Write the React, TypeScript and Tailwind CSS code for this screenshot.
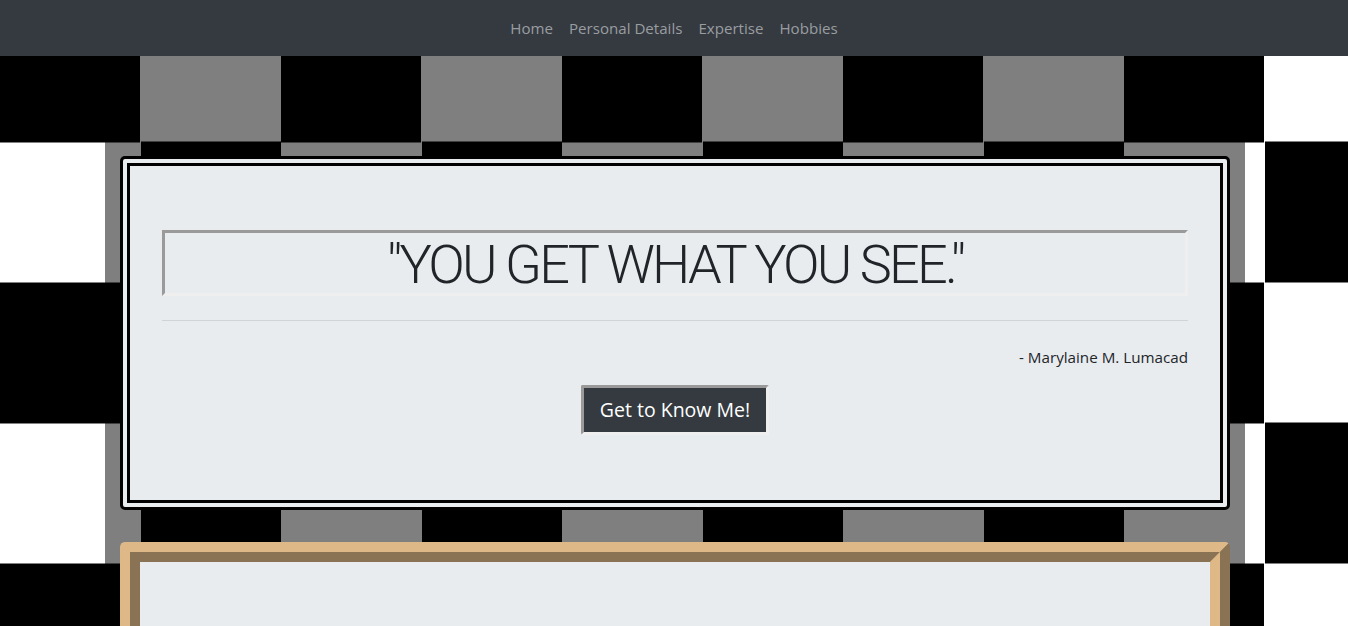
import React from "react";

export default function App() {
  const links = ["Home", "Personal Details", "Expertise", "Hobbies"];
  return (
    <div
      className="min-h-screen w-full overflow-hidden [background-image:conic-gradient(#fff_0_25%,#000_0_50%,#fff_0_75%,#000_0)] [background-size:281px_281px] [background-position:0_1.5px]"
      style={{ fontFamily: '"Open Sans", "Noto Sans", Arial, sans-serif' }}
    >
      <nav className="h-14 bg-[#343a40] flex items-center justify-center">
        <ul className="flex items-center">
          {links.map((l) => (
            <li key={l}>
              <a className="block px-2 py-2 text-[15.1px] leading-6 text-[#9a9da0]" href="#">
                {l}
              </a>
            </li>
          ))}
        </ul>
      </nav>

      <div className="w-[1140px] ml-[105px] bg-black/50 px-[15px] pt-[100px] pb-10">
        <div className="border-[10px] border-double border-black rounded-[5px] bg-[#e9ecef] px-8 pt-16 pb-[65px] mb-8">
          <div className="border-[3px] border-t-[#9a9a9a] border-l-[#9a9a9a] border-b-[#efefef] border-r-[#efefef] h-[66px] flex items-center justify-center">
            <h1 className="font-['Roboto',_sans-serif] text-[54px] font-light leading-none text-[#212529] tracking-[-2.8px] pt-[3px]">
              "YOU GET WHAT YOU SEE."
            </h1>
          </div>
          <hr className="mt-6 mb-4 border-0 border-t border-black/10" />
          <p className="text-right text-[15.2px] leading-6 text-[#212529] mt-6 mb-4">
            - Marylaine M. Lumacad
          </p>
          <div className="flex justify-center">
            <button className="h-[50px] px-4 border-[3px] border-t-[#9a9a9a] border-l-[#9a9a9a] border-b-[#efefef] border-r-[#efefef] bg-[#343a40] text-white text-[19.5px] leading-[30px] rounded-[2px]">
              Get to Know Me!
            </button>
          </div>
        </div>

        <div className="border-[20px] [border-style:ridge] border-[#deb887] rounded-[5px] bg-[#e9ecef] h-[320px]"></div>
      </div>
    </div>
  );
}
